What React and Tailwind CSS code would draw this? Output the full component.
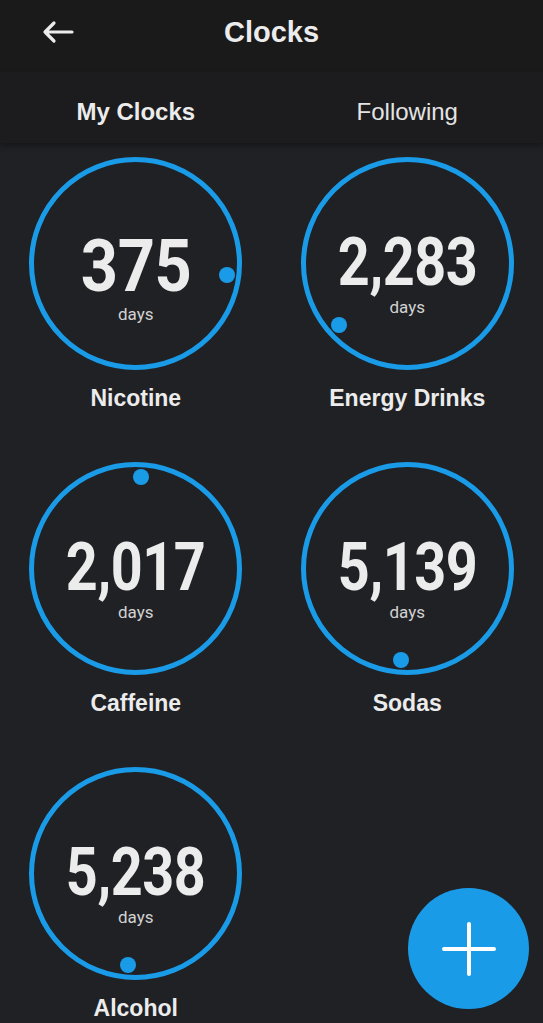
import { useMemo } from 'react'

const clocks = [
  { name: 'Nicotine', days: 375, angle: 97 },
  { name: 'Energy Drinks', days: 2283, angle: 228 },
  { name: 'Caffeine', days: 2017, angle: 3.5 },
  { name: 'Sodas', days: 5139, angle: 184 },
  { name: 'Alcohol', days: 5238, angle: 185 },
]

const ORBIT = 92

function BackArrow() {
  return (
    <svg width="34" height="24" viewBox="0 0 34 24" fill="none">
      <path d="M31 12H4M13 3L4 12l9 9" stroke="#ececec" strokeWidth="3.2" strokeLinecap="round" strokeLinejoin="round" />
    </svg>
  )
}

function Clock({ clock }) {
  const label = clock.days.toLocaleString('en-US')
  const long = label.length > 3
  const dot = useMemo(() => {
    const rad = (clock.angle * Math.PI) / 180
    return { left: `calc(50% + ${Math.sin(rad) * ORBIT - 8}px)`, top: `calc(50% + ${-Math.cos(rad) * ORBIT - 8}px)` }
  }, [clock.angle])

  return (
    <div className="flex flex-col items-center">
      <div className="relative w-[213px] h-[213px] rounded-full border-[5px] border-[#1a9be8] flex flex-col items-center justify-center">
        <div className={long ? 'flex flex-col items-center pt-[22px]' : 'flex flex-col items-center pt-[30px]'}>
          <span
            className={
              long
                ? 'text-[66px] leading-[0.9] font-bold text-[#ececec] scale-x-[0.845] tracking-[-0.5px]'
                : 'text-[73px] leading-[0.9] font-bold text-[#ececec] scale-x-[0.89] tracking-[-0.5px]'
            }
            style={{ fontFamily: 'Roboto, sans-serif' }}
          >
            {label}
          </span>
          <span className="text-[17px] leading-none text-[#d2d2d2] mt-[6px]" style={{ fontFamily: 'Roboto, sans-serif' }}>
            days
          </span>
        </div>
        <span className="absolute w-4 h-4 rounded-full bg-[#1a9be8]" style={dot} />
      </div>
      <div className="mt-[15px] text-[23px] leading-[26px] font-bold text-[#ececec]">{clock.name}</div>
    </div>
  )
}

export default function App() {
  return (
    <div className="relative w-[543px] h-[1023px] overflow-hidden bg-[#202125]" style={{ fontFamily: '"Liberation Sans", Arial, sans-serif' }}>
      {/* Header */}
      <div className="relative h-[72px] bg-[#1a1a1b] flex items-center justify-center pb-[6px]">
        <button className="absolute left-[41px] top-[20px]">
          <BackArrow />
        </button>
        <h1 className="text-[29px] font-bold text-[#ececec]">Clocks</h1>
      </div>

      {/* Tabs */}
      <div className="h-[71px] bg-[#1c1c1e] grid grid-cols-2 shadow-[0_3px_6px_rgba(0,0,0,0.35)] relative z-10">
        <div className="flex items-center justify-center pt-[9px] text-[24px] font-bold text-[#ececec]">My Clocks</div>
        <div className="flex items-center justify-center pt-[9px] text-[24px] text-[#e4e4e4]">Following</div>
      </div>

      {/* Clocks */}
      <div className="grid grid-cols-2 gap-y-[51px] pt-[14px]">
        {clocks.map((c) => (
          <Clock key={c.name} clock={c} />
        ))}
      </div>

      {/* FAB */}
      <button className="absolute left-[408px] top-[888px] w-[121px] h-[121px] rounded-full bg-[#1a9be8] flex items-center justify-center">
        <svg width="54" height="54" viewBox="0 0 54 54">
          <path d="M27 2v50M2 27h50" stroke="#fff" strokeWidth="4" strokeLinecap="round" />
        </svg>
      </button>
    </div>
  )
}
